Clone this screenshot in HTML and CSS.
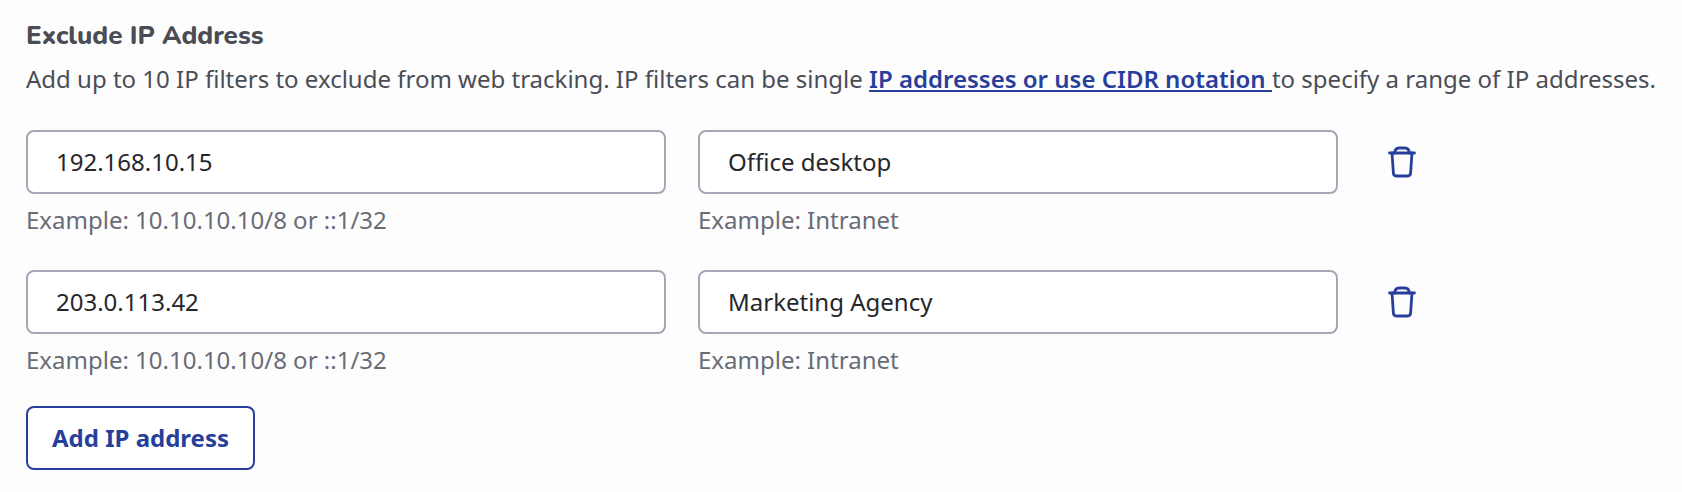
FILE: index.html
```html
<!DOCTYPE html>
<html lang="en">
<head>
    <meta charset="UTF-8">
    <meta name="viewport" content="width=device-width, initial-scale=1.0">
    <title>Exclude IP Address</title>
    <link rel="stylesheet" href="styles.css">
</head>
<body>
    <section class="exclude-ip">
        <h2 class="title">Exclude IP Address</h2>
        <p class="intro">Add up to 10 IP filters to exclude from web tracking. IP filters can be single <a href="#">IP addresses or use CIDR notation </a> to specify a range of IP addresses.</p>

        <div class="ip-row">
            <div class="field">
                <input class="text-input" type="text" value="192.168.10.15">
                <p class="hint">Example: 10.10.10.10/8 or ::1/32</p>
            </div>
            <div class="field">
                <input class="text-input" type="text" value="Office desktop">
                <p class="hint">Example: Intranet</p>
            </div>
            <button class="delete-btn" type="button" aria-label="Delete">
                <svg width="28" height="32" viewBox="0 0 28 32" fill="none" stroke="currentColor" stroke-width="2.8" stroke-linecap="round" stroke-linejoin="round">
                    <path d="M1.5 7H26.5"/>
                    <path d="M6.5 7C7 3.5 9 2 11 2H17C19 2 21 3.5 21.5 7"/>
                    <path d="M4 7L5.4 27C5.5 29 6.6 30 8.4 30H19.6C21.4 30 22.5 29 22.6 27L24 7"/>
                </svg>
            </button>
        </div>

        <div class="ip-row">
            <div class="field">
                <input class="text-input" type="text" value="203.0.113.42">
                <p class="hint">Example: 10.10.10.10/8 or ::1/32</p>
            </div>
            <div class="field">
                <input class="text-input" type="text" value="Marketing Agency">
                <p class="hint">Example: Intranet</p>
            </div>
            <button class="delete-btn" type="button" aria-label="Delete">
                <svg width="28" height="32" viewBox="0 0 28 32" fill="none" stroke="currentColor" stroke-width="2.8" stroke-linecap="round" stroke-linejoin="round">
                    <path d="M1.5 7H26.5"/>
                    <path d="M6.5 7C7 3.5 9 2 11 2H17C19 2 21 3.5 21.5 7"/>
                    <path d="M4 7L5.4 27C5.5 29 6.6 30 8.4 30H19.6C21.4 30 22.5 29 22.6 27L24 7"/>
                </svg>
            </button>
        </div>

        <button class="add-btn" type="button">Add IP address</button>
    </section>
</body>
</html>
```

FILE: styles.css
```css
body {
    font-family: "Noto Sans", sans-serif;
    background: #fdfdfe;
    margin: 0;
    padding: 0;
    color: #4a4d55;
}
.exclude-ip {
    padding: 20px 0 0 26px;
}
.title {
    font-family: "Nunito", "Lato", sans-serif;
    font-size: 26px;
    font-weight: 800;
    line-height: 32px;
    margin: 0 0 11px;
    color: #4a4d55;
}
.intro {
    font-size: 24px;
    line-height: 32px;
    margin: 0 0 35px;
    white-space: nowrap;
}
.intro a {
    color: #273f9b;
    font-weight: 600;
}
.ip-row {
    display: flex;
    align-items: flex-start;
    gap: 32px;
    height: 140px;
}
.field {
    width: 640px;
}
.text-input {
    box-sizing: border-box;
    display: block;
    width: 100%;
    height: 64px;
    padding: 0 28px 2px;
    border: 2px solid #a5a7b6;
    border-radius: 8px;
    background: #fff;
    font-family: inherit;
    font-size: 24px;
    color: #26272b;
}
.hint {
    font-size: 24px;
    line-height: 32px;
    margin: 10px 0 0;
    color: #6a6c75;
}
.delete-btn {
    background: none;
    border: none;
    padding: 0;
    margin: 16px 0 0 18px;
    color: #273f9b;
    cursor: pointer;
}
.add-btn {
    display: block;
    box-sizing: border-box;
    width: 229px;
    height: 64px;
    margin-top: -4px;
    padding: 0 0 2px;
    border: 2px solid #273f9b;
    border-radius: 8px;
    background: #fff;
    font-family: inherit;
    font-size: 24px;
    font-weight: 700;
    color: #273f9b;
    cursor: pointer;
}
```
